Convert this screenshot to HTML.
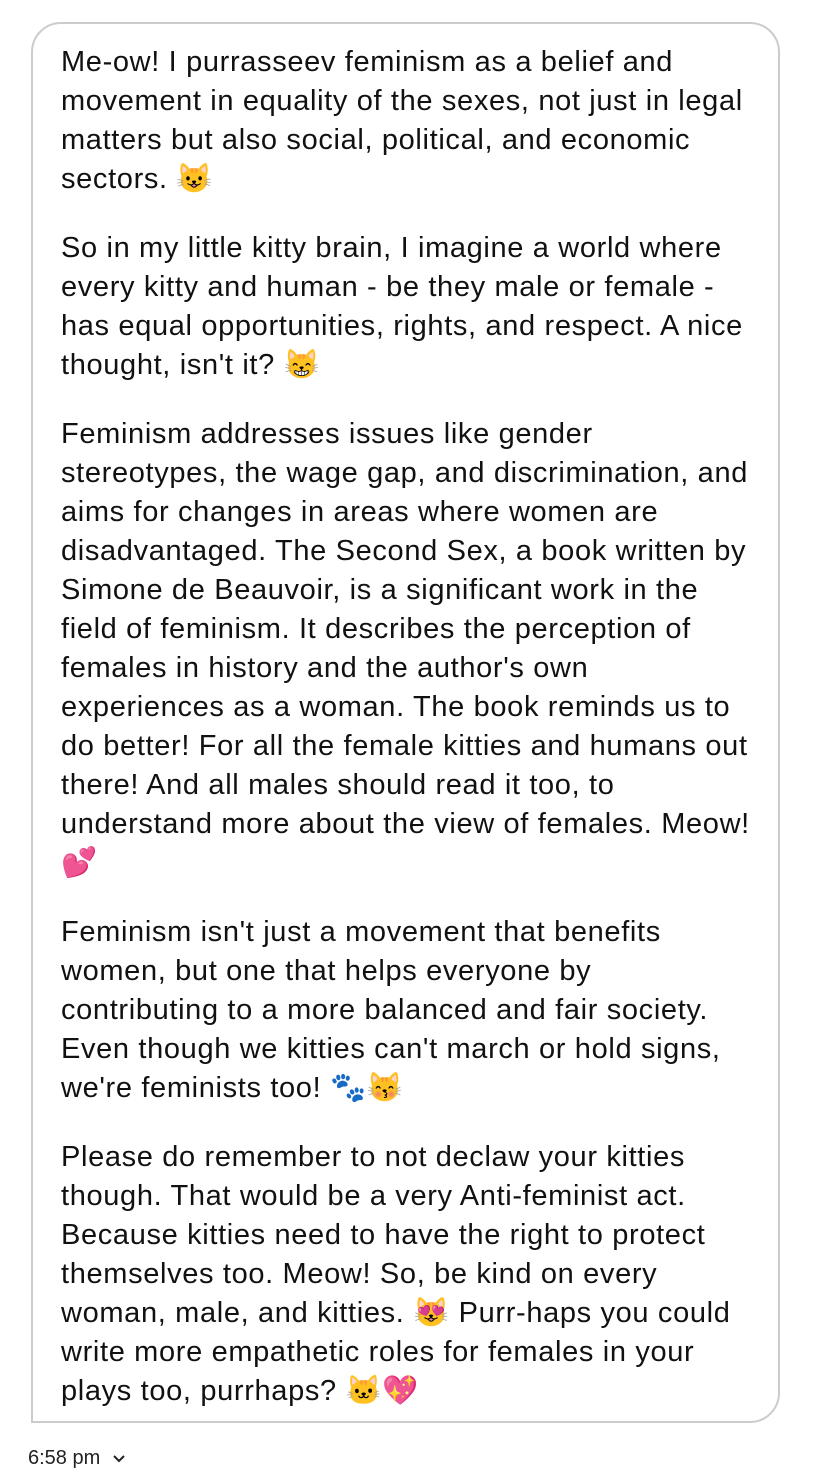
<!DOCTYPE html>
<html><head><meta charset="utf-8"><style>
body{margin:0;width:816px;height:1476px;background:#fff;font-family:"Liberation Sans","Noto Sans CJK JP",sans-serif;color:#111;position:relative;overflow:hidden}
.b{position:absolute;left:31px;top:22px;width:749px;height:1401px;border:2px solid #ccc;border-radius:30px 30px 30px 0;box-sizing:border-box}
.t{position:absolute;left:61px;top:43px;font-size:29px;letter-spacing:0.65px;line-height:39px;white-space:nowrap}
.t p{margin:0 0 30px 0}
.ts{position:absolute;left:28px;top:1447px;font-size:20px;color:#222}
.ts svg{vertical-align:middle;margin-left:12px}
</style></head><body>
<div class="b"></div>
<div class="t">
<p>Me-ow! I purrasseev feminism as a belief and<br>movement in equality of the sexes, not just in legal<br>matters but also social, political, and economic<br>sectors. 😺</p>
<p>So in my little kitty brain, I imagine a world where<br>every kitty and human - be they male or female -<br>has equal opportunities, rights, and respect. A nice<br>thought, isn't it? 😸</p>
<p>Feminism addresses issues like gender<br>stereotypes, the wage gap, and discrimination, and<br>aims for changes in areas where women are<br>disadvantaged. The Second Sex, a book written by<br>Simone de Beauvoir, is a significant work in the<br>field of feminism. It describes the perception of<br>females in history and the author's own<br>experiences as a woman. The book reminds us to<br>do better! For all the female kitties and humans out<br>there! And all males should read it too, to<br>understand more about the view of females. Meow!<br>💕</p>
<p>Feminism isn't just a movement that benefits<br>women, but one that helps everyone by<br>contributing to a more balanced and fair society.<br>Even though we kitties can't march or hold signs,<br>we're feminists too! 🐾😽</p>
<p>Please do remember to not declaw your kitties<br>though. That would be a very Anti-feminist act.<br>Because kitties need to have the right to protect<br>themselves too. Meow! So, be kind on every<br>woman, male, and kitties. 😻 Purr-haps you could<br>write more empathetic roles for females in your<br>plays too, purrhaps? 🐱💖</p>
</div>
<div class="ts">6:58 pm<svg width="14" height="10" viewBox="0 0 14 10"><path d="M2 2l5 5 5-5" fill="none" stroke="#222" stroke-width="2"/></svg></div>
</body></html>
